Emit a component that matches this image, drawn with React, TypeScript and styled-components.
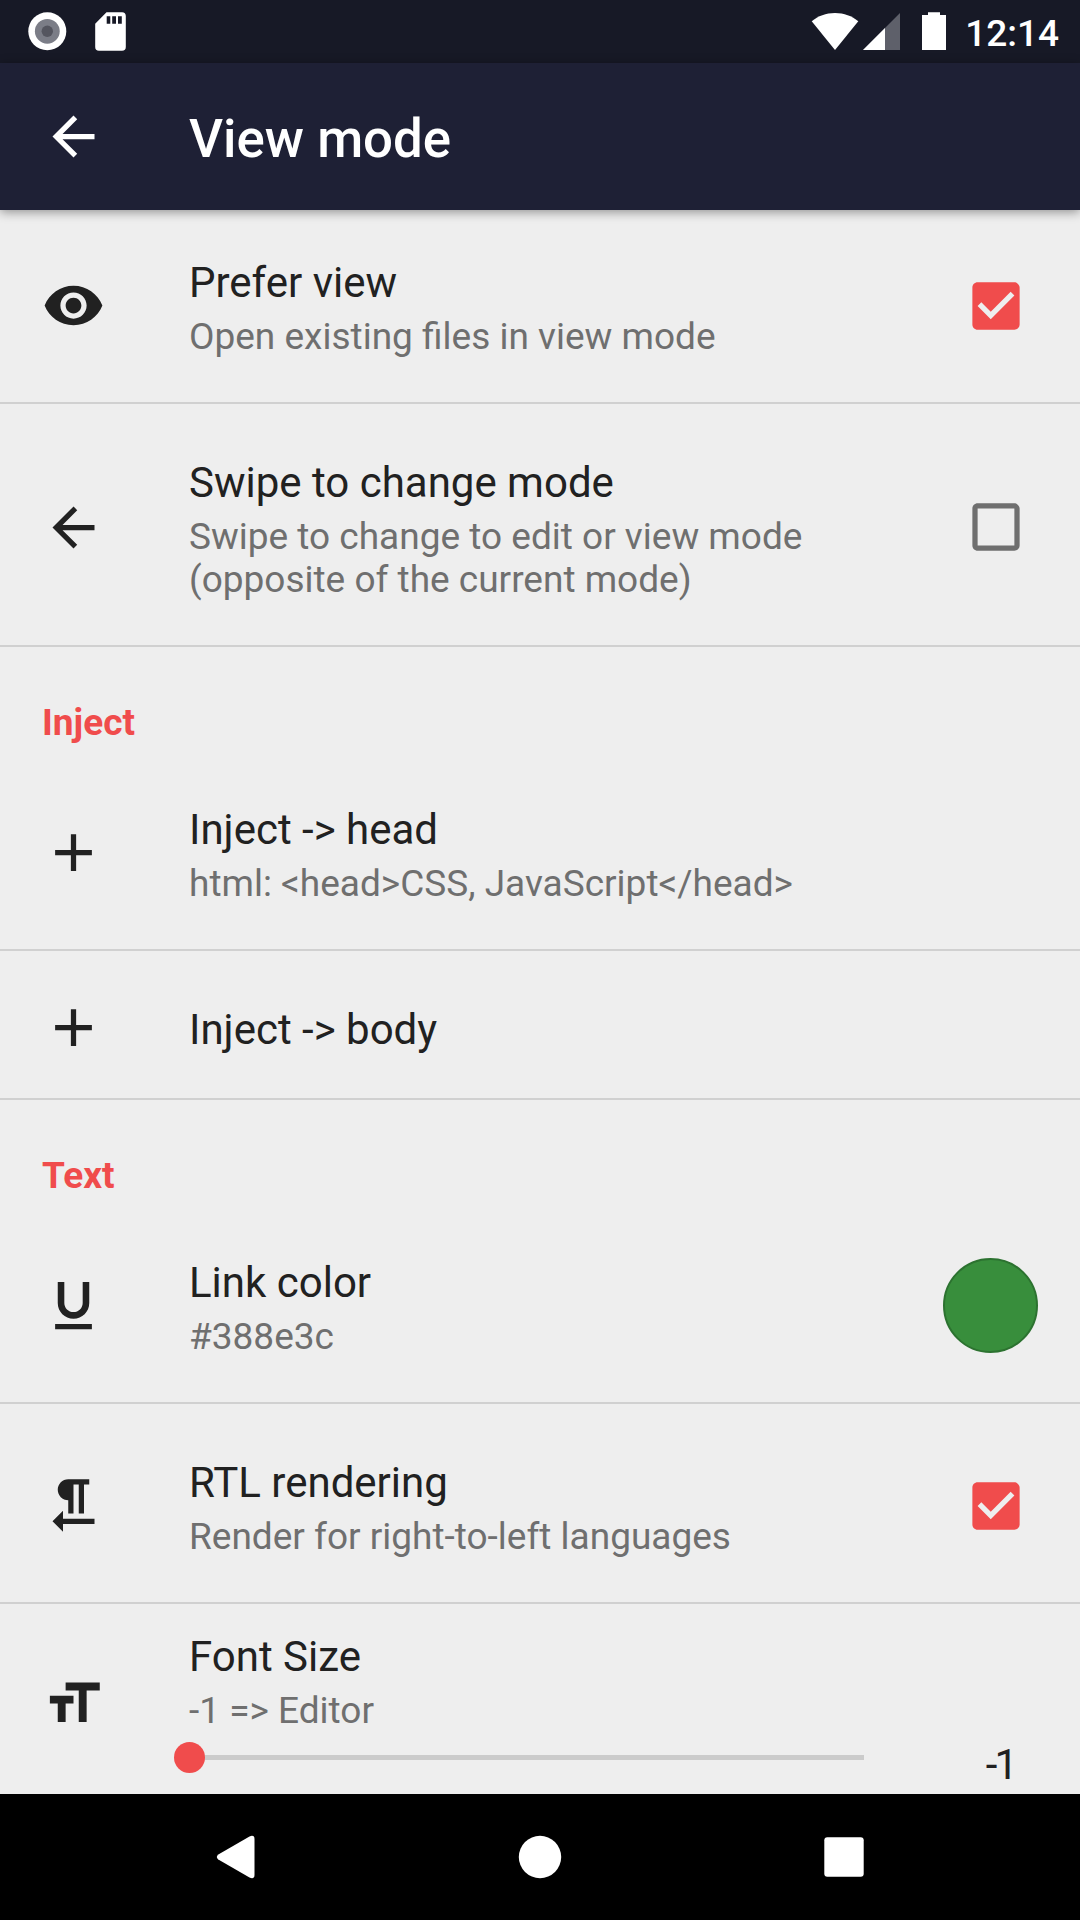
import React from "react";
import styled, { createGlobalStyle } from "styled-components";

const GlobalStyle = createGlobalStyle`
  *, *::before, *::after { box-sizing: border-box; }
  html, body { margin: 0; padding: 0; background: #eeeeee; }
  body { font-family: Roboto, "Noto Sans", sans-serif; -webkit-font-smoothing: antialiased; }
`;

const colors = {
  status: "#171926",
  toolbar: "#1e2035",
  surface: "#eeeeee",
  divider: "#d0d0d0",
  primaryText: "#212121",
  secondaryText: "#6f6f6f",
  accent: "#f04c4c",
};

const Screen = styled.div`
  width: 1080px;
  height: 1920px;
  display: flex;
  flex-direction: column;
  overflow: hidden;
  background: ${colors.surface};
`;

const StatusBar = styled.header`
  flex: none;
  height: 63px;
  display: flex;
  align-items: center;
  justify-content: space-between;
  background: ${colors.status};
`;

const StatusGroup = styled.div<{ $side: "left" | "right" }>`
  display: flex;
  align-items: center;
  height: 63px;
  padding: ${(p) => (p.$side === "left" ? "0 0 0 28px" : "0 21px 0 0")};
`;

const Clock = styled.span`
  font-size: 37px;
  line-height: 60px;
  font-weight: 500;
  color: #ffffff;
  padding-top: 4px;
  margin-left: 18px;
`;

const Toolbar = styled.nav`
  flex: none;
  height: 147px;
  display: flex;
  align-items: center;
  background: ${colors.toolbar};
  box-shadow: 0 2px 10px rgba(0, 0, 0, 0.4);
  z-index: 1;
`;

const ToolbarButton = styled.button`
  width: 189px;
  height: 147px;
  padding: 0 0 0 42px;
  border: 0;
  background: none;
  display: flex;
  align-items: center;
  color: #ffffff;
`;

const ToolbarTitle = styled.h1`
  margin: 0;
  font-size: 52.8px;
  line-height: 62px;
  font-weight: 500;
  color: #ffffff;
  padding-top: 4px;
`;

const List = styled.main`
  flex: 1;
  min-height: 0;
  margin-top: -6px;
  overflow: hidden;
`;

const Row = styled.div`
  display: flex;
  align-items: stretch;
  border-bottom: 2px solid ${colors.divider};
`;

const IconCell = styled.div`
  flex: none;
  width: 189px;
  padding: 5px 0 0 42px;
  display: flex;
  align-items: center;
  color: ${colors.primaryText};
`;

const TextCell = styled.div`
  flex: 1;
  min-width: 0;
  padding: 54px 0 44px;
  display: flex;
  flex-direction: column;
  gap: 8px;
`;

const Title = styled.div`
  font-size: 42px;
  line-height: 49px;
  color: ${colors.primaryText};
`;

const Summary = styled.div`
  font-size: 37px;
  line-height: 43px;
  color: ${colors.secondaryText};
`;

const WidgetCell = styled.div<{ $inset: number }>`
  flex: none;
  padding: 5px ${(p) => p.$inset}px 0 21px;
  display: flex;
  align-items: center;
`;

const Swatch = styled.div<{ $color: string }>`
  width: 95px;
  height: 95px;
  border-radius: 50%;
  background: ${(p) => p.$color};
  border: 2px solid #2c7230;
`;

const Category = styled.h2`
  margin: 0;
  height: 104px;
  padding: 54px 42px 0;
  font-size: 37px;
  line-height: 43px;
  font-weight: 700;
  color: ${colors.accent};
`;

const SliderRow = styled.div`
  display: flex;
  height: 190px;
`;

const SliderIcon = styled(IconCell)`
  align-items: flex-start;
  padding-top: 68px;
`;

const SliderBody = styled.div`
  width: 675px;
  padding-top: 28px;
  display: flex;
  flex-direction: column;
  gap: 8px;
`;

const Track = styled.div`
  height: 5px;
  margin-top: 15px;
  background: #cbcbcb;
  display: flex;
  align-items: center;
`;

const Thumb = styled.div`
  flex: none;
  width: 31px;
  height: 31px;
  margin-left: -15px;
  border-radius: 50%;
  background: ${colors.accent};
`;

const SliderValue = styled.div`
  flex: 1;
  padding: 136px 65px 0 0;
  text-align: right;
  font-size: 42px;
  line-height: 49px;
  letter-spacing: -3px;
  color: ${colors.primaryText};
`;

const NavBar = styled.footer`
  flex: none;
  height: 126px;
  background: #000000;
  display: grid;
  grid-template-columns: repeat(3, 304px);
  justify-content: center;
  align-items: center;
  justify-items: center;
`;

const icons = {
  back: "M20 11H7.83l5.59-5.59L12 4l-8 8 8 8 1.41-1.41L7.83 13H20v-2z",
  eye: "M12 4.5C7 4.5 2.73 7.61 1 12c1.73 4.39 6 7.5 11 7.5s9.27-3.11 11-7.5c-1.73-4.39-6-7.5-11-7.5zM12 17c-2.76 0-5-2.24-5-5s2.24-5 5-5 5 2.24 5 5-2.24 5-5 5zm0-8c-1.66 0-3 1.34-3 3s1.34 3 3 3 3-1.34 3-3-1.34-3-3-3z",
  add: "M19 13h-6v6h-2v-6H5v-2h6V5h2v6h6v2z",
  underline:
    "M12 17c3.31 0 6-2.69 6-6V3h-2.5v8c0 1.93-1.57 3.5-3.5 3.5S8.5 12.93 8.5 11V3H6v8c0 3.31 2.69 6 6 6zm-7 2v2h14v-2H5z",
  rtl: "M10 10v5h2V4h2v11h2V4h2V2h-8C7.79 2 6 3.79 6 6s1.79 4 4 4zm-2 7v-3l-4 4 4 4v-3h12v-2H8z",
  size: "M9 4v3h5v12h3V7h5V4H9zm-6 8h3v7h3v-7h3V9H3v3z",
  checked:
    "M19 3H5c-1.11 0-2 .9-2 2v14c0 1.1.89 2 2 2h14c1.11 0 2-.9 2-2V5c0-1.1-.89-2-2-2zm-9 14l-5-5 1.41-1.41L10 14.17l7.59-7.59L19 8l-9 9z",
  unchecked:
    "M19 5v14H5V5h14m0-2H5c-1.1 0-2 .9-2 2v14c0 1.1.9 2 2 2h14c1.1 0 2-.9 2-2V5c0-1.1-.9-2-2-2z",
};

type IconName = keyof typeof icons;

const Icon = ({ name }: { name: IconName }) => (
  <svg width="63" height="63" viewBox="0 0 24 24" fill="currentColor" aria-hidden>
    <path d={icons[name]} />
  </svg>
);

const Checkbox = ({ checked }: { checked: boolean }) => (
  <svg
    width="64"
    height="64"
    viewBox="-0.19 -0.19 24.38 24.38"
    fill={checked ? colors.accent : colors.secondaryText}
    role="checkbox"
    aria-checked={checked}
  >
    <path d={checked ? icons.checked : icons.unchecked} />
  </svg>
);

interface PreferenceProps {
  icon: IconName;
  title: string;
  summary?: string;
  inset?: number;
  children?: React.ReactNode;
}

const Preference = ({ icon, title, summary, inset = 52, children }: PreferenceProps) => (
  <Row>
    <IconCell>
      <Icon name={icon} />
    </IconCell>
    <TextCell>
      <Title>{title}</Title>
      {summary && <Summary>{summary}</Summary>}
    </TextCell>
    {children && <WidgetCell $inset={inset}>{children}</WidgetCell>}
  </Row>
);

const StatusIconsLeft = () => (
  <svg width="100" height="63" viewBox="28 0 100 63" aria-hidden>
    <circle cx="47.3" cy="31.3" r="19" fill="#ffffff" />
    <circle cx="47.3" cy="31.3" r="12.4" fill="#7b7d87" />
    <circle cx="47.3" cy="31.3" r="5.7" fill="#54555f" />
    <path
      fill="#ffffff"
      fillRule="evenodd"
      d="M106.5 12.3H122a3.8 3.8 0 0 1 3.8 3.8V47a3.8 3.8 0 0 1-3.8 3.8H99A3.8 3.8 0 0 1 95.2 47V23.700zM106.700 16.200v7.600h3.600v-7.600zM112.200 16.200v7.600h3.800v-7.600zM118 16.200v7.600h3.800v-7.600z"
    />
  </svg>
);

const StatusIconsRight = () => (
  <svg width="136" height="63" viewBox="811 0 136 63" aria-hidden>
    <path fill="#ffffff" d="M835 50L811.700 21.300C818 16 826 13 835 13s17 3 23.300 8.300z" />
    <path fill="#5e606a" d="M900 13v37h-37z" />
    <path fill="#ffffff" d="M885 28v22h-22z" />
    <path fill="#ffffff" d="M928 12.200h12v2.800h6v35h-24V15h6z" />
  </svg>
);

export default function App() {
  return (
    <>
      <GlobalStyle />
      <Screen>
        <StatusBar>
          <StatusGroup $side="left">
            <StatusIconsLeft />
          </StatusGroup>
          <StatusGroup $side="right">
            <StatusIconsRight />
            <Clock>12:14</Clock>
          </StatusGroup>
        </StatusBar>
        <Toolbar>
          <ToolbarButton aria-label="Back">
            <Icon name="back" />
          </ToolbarButton>
          <ToolbarTitle>View mode</ToolbarTitle>
        </Toolbar>
        <List>
          <Preference icon="eye" title="Prefer view" summary="Open existing files in view mode">
            <Checkbox checked />
          </Preference>
          <Preference
            icon="back"
            title="Swipe to change mode"
            summary="Swipe to change to edit or view mode (opposite of the current mode)"
          >
            <Checkbox checked={false} />
          </Preference>
          <Category>Inject</Category>
          <Preference
            icon="add"
            title="Inject -> head"
            summary="html: <head>CSS, JavaScript</head>"
          />
          <Preference icon="add" title="Inject -> body" />
          <Category>Text</Category>
          <Preference icon="underline" title="Link color" summary="#388e3c" inset={42}>
            <Swatch $color="#388e3c" />
          </Preference>
          <Preference
            icon="rtl"
            title="RTL rendering"
            summary="Render for right-to-left languages"
          >
            <Checkbox checked />
          </Preference>
          <SliderRow>
            <SliderIcon>
              <Icon name="size" />
            </SliderIcon>
            <SliderBody>
              <Title>Font Size</Title>
              <Summary>-1 =&gt; Editor</Summary>
              <Track>
                <Thumb />
              </Track>
            </SliderBody>
            <SliderValue>-1</SliderValue>
          </SliderRow>
        </List>
        <NavBar>
          <svg width="40" height="44" viewBox="0 0 40 44" aria-hidden>
            <path
              fill="#ffffff"
              d="M2.300 19.600L33.500 1.400Q38.500 -0.500 38.500 4V40Q38.500 44.500 33.500 42.600L2.300 24.400Q-0.700 22 2.300 19.600z"
            />
          </svg>
          <svg width="44" height="44" viewBox="0 0 44 44" aria-hidden>
            <circle cx="22" cy="22" r="21.200" fill="#ffffff" />
          </svg>
          <svg width="40" height="40" viewBox="0 0 40 40" aria-hidden>
            <rect x="0.300" y="0.300" width="39.400" height="39.400" rx="3" fill="#ffffff" />
          </svg>
        </NavBar>
      </Screen>
    </>
  );
}
